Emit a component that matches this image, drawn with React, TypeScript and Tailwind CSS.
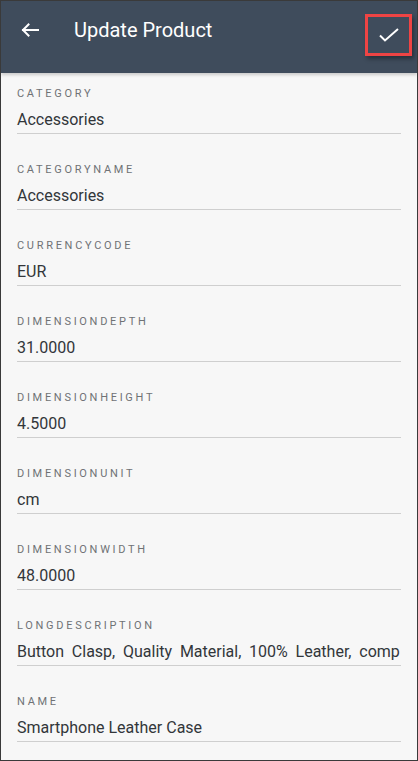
import React from "react";

const fields: { label: string; value: string; wide?: boolean }[] = [
  { label: "CATEGORY", value: "Accessories" },
  { label: "CATEGORYNAME", value: "Accessories" },
  { label: "CURRENCYCODE", value: "EUR" },
  { label: "DIMENSIONDEPTH", value: "31.0000" },
  { label: "DIMENSIONHEIGHT", value: "4.5000" },
  { label: "DIMENSIONUNIT", value: "cm" },
  { label: "DIMENSIONWIDTH", value: "48.0000" },
  {
    label: "LONGDESCRIPTION",
    value: "Button Clasp, Quality Material, 100% Leather, comp",
    wide: true,
  },
  { label: "NAME", value: "Smartphone Leather Case" },
];

export default function App() {
  return (
    <div
      className="w-[418px] h-[761px] border border-[#3a3a3a] bg-[#f7f7f7] overflow-hidden flex flex-col"
      style={{ fontFamily: "Roboto, 'Noto Sans', sans-serif" }}
    >
      <header className="h-[72px] shrink-0 bg-[#3f4c5c] shadow-[0_2px_3px_rgba(0,0,0,0.18)] relative z-10">
        <div className="h-[57px] flex items-center pl-[20px] pr-[5px]">
          <svg width="18" height="14" viewBox="0 0 18 14" fill="none" className="shrink-0">
            <path d="M17 7H2M7.5 1.5L2 7l5.5 5.5" stroke="#ffffff" strokeWidth="2" strokeLinecap="square" />
          </svg>
          <h1 className="ml-[35px] text-[20px] leading-[28px] text-white font-normal flex-1">
            Update Product
          </h1>
          <div className="w-[47px] h-[42px] mt-[10px] border-[3px] border-[#ef4444] shadow-[2px_3px_4px_rgba(0,0,0,0.35)] flex items-center justify-center">
            <svg width="22" height="16" viewBox="0 0 22 16" fill="none">
              <path d="M2 8.5l5 5L20 2" stroke="#ffffff" strokeWidth="2" />
            </svg>
          </div>
        </div>
      </header>
      <main className="flex flex-col gap-[28px] px-[16px] pt-[13px]">
        {fields.map((f) => (
          <div key={f.label} className="flex flex-col border-b border-[#cfcfcf] pb-[1px]">
            <div className="text-[11px] leading-[16px] tracking-[2.7px] text-[#6f7275]">
              {f.label}
            </div>
            <div
              className={
                f.wide
                  ? "mt-[6px] text-[16px] leading-[24px] text-[#32363a] whitespace-nowrap [word-spacing:3.8px]"
                  : "mt-[6px] text-[16px] leading-[24px] text-[#32363a] whitespace-nowrap"
              }
            >
              {f.value}
            </div>
          </div>
        ))}
      </main>
    </div>
  );
}
